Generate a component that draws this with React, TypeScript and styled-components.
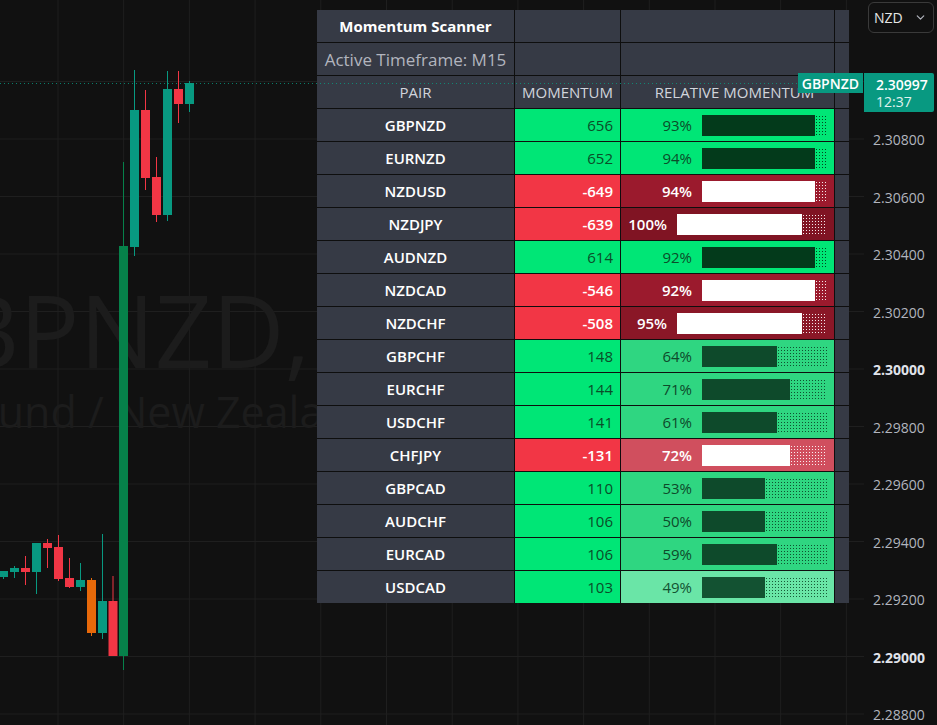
import React from 'react';
import styled, { createGlobalStyle } from 'styled-components';
import { ChevronDown } from 'lucide-react';

const GlobalStyle = createGlobalStyle`
  html, body {
    margin: 0;
    padding: 0;
    background: #111111;
  }
  body {
    font-family: "Open Sans", "Noto Sans", sans-serif;
    overflow: hidden;
  }
`;

// palettes for the relative momentum cells
const greenHi = { bg: '#00e676', fill: '#033a1b', dot: 'rgba(3, 58, 27, 0.95)', text: '#0b4d29' };
const greenMid = { bg: '#2fd681', fill: '#0e4a2b', dot: 'rgba(14, 74, 43, 0.95)', text: '#0e4a2b' };
const greenLo = { bg: '#6ae5a7', fill: '#135232', dot: 'rgba(19, 82, 50, 0.95)', text: '#135232' };
const red = (bg: string) => ({ bg, fill: '#ffffff', dot: 'rgba(255, 255, 255, 0.9)', text: '#ffffff' });

interface ScanRow {
  pair: string;
  momentum: number;
  pct: number;
  filled: number;
  empty: number;
  tone: { bg: string; fill: string; dot: string; text: string };
}

const rows: ScanRow[] = [
  { pair: 'GBPNZD', momentum: 656, pct: 93, filled: 9, empty: 1, tone: greenHi },
  { pair: 'EURNZD', momentum: 652, pct: 94, filled: 9, empty: 1, tone: greenHi },
  { pair: 'NZDUSD', momentum: -649, pct: 94, filled: 9, empty: 1, tone: red('#9b1a2d') },
  { pair: 'NZDJPY', momentum: -639, pct: 100, filled: 10, empty: 2, tone: red('#801423') },
  { pair: 'AUDNZD', momentum: 614, pct: 92, filled: 9, empty: 1, tone: greenHi },
  { pair: 'NZDCAD', momentum: -546, pct: 92, filled: 9, empty: 1, tone: red('#9b1a2d') },
  { pair: 'NZDCHF', momentum: -508, pct: 95, filled: 10, empty: 2, tone: red('#8a1727') },
  { pair: 'GBPCHF', momentum: 148, pct: 64, filled: 6, empty: 4, tone: greenMid },
  { pair: 'EURCHF', momentum: 144, pct: 71, filled: 7, empty: 3, tone: greenMid },
  { pair: 'USDCHF', momentum: 141, pct: 61, filled: 6, empty: 4, tone: greenMid },
  { pair: 'CHFJPY', momentum: -131, pct: 72, filled: 7, empty: 3, tone: red('#d04f5e') },
  { pair: 'GBPCAD', momentum: 110, pct: 53, filled: 5, empty: 5, tone: greenMid },
  { pair: 'AUDCHF', momentum: 106, pct: 50, filled: 5, empty: 5, tone: greenMid },
  { pair: 'EURCAD', momentum: 106, pct: 59, filled: 6, empty: 4, tone: greenMid },
  { pair: 'USDCAD', momentum: 103, pct: 49, filled: 5, empty: 5, tone: greenLo },
];

const TEAL = '#089981';
const RED = '#f23645';
const ORANGE = '#e8690a';
const DEEP = '#06814a';

const candles = [
  { x: 3.5, bt: 571, bb: 577, wt: 571, wb: 579, c: TEAL },
  { x: 14.5, bt: 568, bb: 572, wt: 566, wb: 578, c: TEAL },
  { x: 25.5, bt: 568, bb: 572, wt: 556, wb: 585, c: RED },
  { x: 36.5, bt: 543, bb: 572, wt: 543, wb: 594, c: TEAL },
  { x: 47.5, bt: 543, bb: 548, wt: 539, wb: 568, c: RED },
  { x: 58.5, bt: 547, bb: 579, wt: 535, wb: 581, c: RED },
  { x: 69.5, bt: 578, bb: 587, wt: 558, wb: 588, c: RED },
  { x: 80.5, bt: 580, bb: 587, wt: 563, wb: 591, c: TEAL },
  { x: 91.5, bt: 580, bb: 633, wt: 578, wb: 636, c: ORANGE },
  { x: 102.5, bt: 601, bb: 633, wt: 534, wb: 639, c: TEAL },
  { x: 113, bt: 601, bb: 656, wt: 576, wb: 656, c: RED },
  { x: 123.5, bt: 246, bb: 656, wt: 162, wb: 670, c: DEEP },
  { x: 134.5, bt: 110, bb: 247, wt: 70, wb: 256, c: TEAL },
  { x: 145.5, bt: 110, bb: 178, wt: 90, wb: 190, c: RED },
  { x: 156.5, bt: 177, bb: 215, wt: 157, wb: 222, c: RED },
  { x: 167.5, bt: 89, bb: 215, wt: 71, wb: 221, c: TEAL },
  { x: 178.5, bt: 89, bb: 104, wt: 71, wb: 123, c: RED },
  { x: 189.5, bt: 83, bb: 104, wt: 81, wb: 112, c: TEAL },
];

const prices = ['2.30800', '2.30600', '2.30400', '2.30200', '2.30000', '2.29800', '2.29600', '2.29400', '2.29200', '2.29000', '2.28800'];

const App = () => {
  const renderRows = rows.map((row) => {
    const down = row.momentum < 0;
    return (
      <React.Fragment key={row.pair}>
        <Cell $weight={600}>{row.pair}</Cell>
        <Cell $bg={down ? RED : '#00e676'} $color={down ? '#ffffff' : '#0b4d29'} $weight={down ? 600 : 400} $align="right">
          {row.momentum}
        </Cell>
        <Cell $bg={row.tone.bg} $color={row.tone.text} $weight={down ? 600 : 400} $align="right">
          <Percent>{row.pct}%</Percent>
          <Bar>
            <BarFilled style={{ width: row.filled * 12.5 }} $color={row.tone.fill} />
            <BarEmpty style={{ width: row.empty * 12.5 }} $dot={row.tone.dot} />
          </Bar>
        </Cell>
        <Cell />
      </React.Fragment>
    );
  });

  return (
    <>
      <GlobalStyle />
      <Screen>
        <ChartPane>
          <ChartCanvas width={864} height={725}>
            {Array.from({ length: 13 }, (_, i) => (
              <line key={`v${i}`} x1={58 + i * 65.7} x2={58 + i * 65.7} y1={0} y2={725} stroke="#1f1f1f" />
            ))}
            {Array.from({ length: 12 }, (_, i) => (
              <line key={`h${i}`} x1={0} x2={864} y1={81.5 + i * 57.5} y2={81.5 + i * 57.5} stroke="#1f1f1f" />
            ))}
            <text x={-118} y={368} fill="#1c1c1c" fontSize={100} fontFamily="Open Sans, sans-serif">
              GBPNZD,
            </text>
            <text x={-54} y={428} fill="#1c1c1c" fontSize={43} fontFamily="Open Sans, sans-serif">
              Pound / New Zeala
            </text>
            {candles.map((k, i) => (
              <g key={i} fill={k.c}>
                <rect x={k.x - 0.5} y={k.wt} width={1} height={k.wb - k.wt} />
                <rect x={k.x - 4.5} y={k.bt} width={9} height={Math.max(k.bb - k.bt, 1)} />
              </g>
            ))}
          </ChartCanvas>

          <Scanner>
            <Cell $weight={700}>Momentum Scanner</Cell>
            <Cell />
            <Cell />
            <Cell />
            <Cell $color="#b2b5be" $size={17}>Active Timeframe: M15</Cell>
            <Cell />
            <Cell />
            <Cell />
            <Cell $color="#d1d4dc">PAIR</Cell>
            <Cell $color="#d1d4dc">MOMENTUM</Cell>
            <HeaderWide>RELATIVE MOMENTUM</HeaderWide>
            <Cell />
            {renderRows}
          </Scanner>

          <PriceLine />
          <SymbolTag>GBPNZD</SymbolTag>
        </ChartPane>

        <PriceAxis>
          <CurrencySelect>
            NZD
            <ChevronDown size={13} strokeWidth={2.2} />
          </CurrencySelect>
          <LastPrice>
            <span>2.30997</span>
            <LastTime>12:37</LastTime>
          </LastPrice>
          <TickList>
            {prices.map((p) => (
              <Tick key={p} $strong={p.endsWith('000')}>
                {p}
              </Tick>
            ))}
          </TickList>
        </PriceAxis>
      </Screen>
    </>
  );
};

// layout
const Screen = styled.div`
  display: flex;
  width: 937px;
  height: 725px;
  overflow: hidden;
  background: #111111;
`;

const ChartPane = styled.div`
  position: relative;
  width: 864px;
  height: 725px;
  overflow: hidden;
`;

const ChartCanvas = styled.svg`
  display: block;
`;

// scanner table
const Scanner = styled.div`
  position: absolute;
  top: 10px;
  left: 317px;
  display: grid;
  grid-template-columns: 197px 105px 213px 14px;
  grid-auto-rows: 32px;
  gap: 1px;
  background: #0e0e0e;
`;

const Cell = styled.div<{ $bg?: string; $color?: string; $weight?: number; $size?: number; $align?: 'right' | 'center' }>`
  display: flex;
  align-items: center;
  justify-content: ${(p) => (p.$align === 'right' ? 'flex-end' : 'center')};
  gap: 10px;
  padding: 0 7px;
  background: ${(p) => p.$bg || '#363a45'};
  color: ${(p) => p.$color || '#ffffff'};
  font-size: ${(p) => p.$size || 15}px;
  font-weight: ${(p) => p.$weight || 400};
  white-space: nowrap;
`;

const HeaderWide = styled(Cell)`
  padding: 0 0 0 14px;
  color: #d1d4dc;
`;

const Percent = styled.span`
  line-height: 1;
`;

const Bar = styled.div`
  display: flex;
  height: 21px;
`;

const BarFilled = styled.div<{ $color: string }>`
  height: 100%;
  background: ${(p) => p.$color};
`;

const BarEmpty = styled.div<{ $dot: string }>`
  height: 100%;
  background-image: radial-gradient(circle, ${(p) => p.$dot} 0.75px, transparent 0.95px);
  background-size: 3px 3px;
`;

// overlays on the chart
const PriceLine = styled.div`
  position: absolute;
  top: 83px;
  left: 0;
  width: 864px;
  height: 1px;
  background: repeating-linear-gradient(to right, ${TEAL} 0 1px, transparent 1px 4px);
  opacity: 0.8;
`;

const SymbolTag = styled.div`
  position: absolute;
  top: 73px;
  right: 1px;
  height: 20px;
  padding: 0 4px;
  display: flex;
  align-items: center;
  background: ${TEAL};
  color: #ffffff;
  font-size: 14px;
  font-weight: 600;
`;

// price axis
const PriceAxis = styled.div`
  position: relative;
  width: 73px;
  height: 725px;
`;

const CurrencySelect = styled.div`
  position: absolute;
  top: 2px;
  left: 4px;
  width: 66px;
  height: 31px;
  box-sizing: border-box;
  display: flex;
  align-items: center;
  justify-content: space-between;
  padding: 0 6px 0 5px;
  border: 1px solid #3a3a3a;
  border-radius: 6px;
  color: #e6e6e6;
  font-size: 14px;

  svg {
    color: #b2b5be;
  }
`;

const LastPrice = styled.div`
  position: absolute;
  top: 73px;
  left: 0;
  width: 70px;
  height: 39px;
  box-sizing: border-box;
  padding: 1px 0 0 12px;
  display: flex;
  flex-direction: column;
  justify-content: center;
  background: ${TEAL};
  border-radius: 0 2px 2px 0;
  color: #ffffff;
  font-size: 14px;
  font-weight: 600;
  line-height: 17px;
`;

const LastTime = styled.span`
  font-weight: 400;
  color: #e0f3ef;
`;

const TickList = styled.div`
  display: flex;
  flex-direction: column;
  padding-top: 111px;
`;

const Tick = styled.div<{ $strong: boolean }>`
  display: flex;
  align-items: center;
  height: 57.5px;
  flex-shrink: 0;
  padding-left: 9px;
  color: ${(p) => (p.$strong ? '#e0e3eb' : '#b2b5be')};
  font-size: 14px;
  font-weight: ${(p) => (p.$strong ? 700 : 400)};
`;

export default App;
